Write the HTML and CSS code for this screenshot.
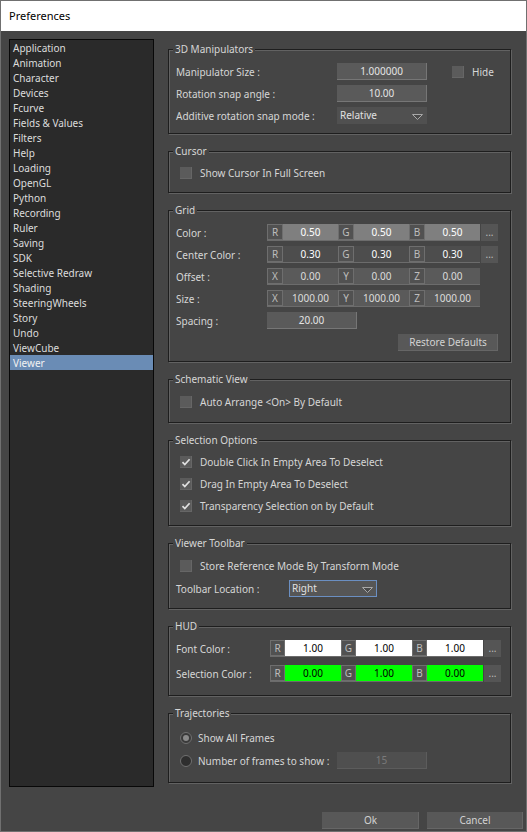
FILE: index.html
```html
<!DOCTYPE html>
<html>
<head>
<meta charset="utf-8">
<title>Preferences</title>
<link rel="stylesheet" href="styles.css">
</head>
<body>
<div class="window">
  <div class="titlebar">Preferences</div>
  <div class="client">
    <div class="main">
      <ul class="nav">
        <li>Application</li>
        <li>Animation</li>
        <li>Character</li>
        <li>Devices</li>
        <li>Fcurve</li>
        <li>Fields &amp; Values</li>
        <li>Filters</li>
        <li>Help</li>
        <li>Loading</li>
        <li>OpenGL</li>
        <li>Python</li>
        <li>Recording</li>
        <li>Ruler</li>
        <li>Saving</li>
        <li>SDK</li>
        <li>Selective Redraw</li>
        <li>Shading</li>
        <li>SteeringWheels</li>
        <li>Story</li>
        <li>Undo</li>
        <li>ViewCube</li>
        <li class="selected">Viewer</li>
      </ul>

      <div class="pages">
        <!-- 3D Manipulators -->
        <section class="group g-manip">
          <span class="group-title">3D Manipulators</span>
          <div class="row">
            <span class="label lw-manip">Manipulator Size :</span>
            <span class="field w90">1.000000</span>
            <span class="check hide-check"><span class="box"></span>Hide</span>
          </div>
          <div class="row">
            <span class="label lw-manip">Rotation snap angle :</span>
            <span class="field w90">10.00</span>
          </div>
          <div class="row">
            <span class="label lw-manip">Additive rotation snap mode :</span>
            <span class="combo w90">Relative
              <svg class="arrow" width="11" height="6" viewBox="0 0 11 6"><path d="M0.5 0.5 H10.5 L5.5 5.5 Z" fill="#4a4a4a" stroke="#a8a8a8" stroke-width="1"/></svg>
            </span>
          </div>
        </section>

        <!-- Cursor -->
        <section class="group g-single">
          <span class="group-title">Cursor</span>
          <div class="row">
            <span class="check"><span class="box"></span>Show Cursor In Full Screen</span>
          </div>
        </section>

        <!-- Grid -->
        <section class="group g-grid">
          <span class="group-title">Grid</span>
          <div class="row">
            <span class="label lw-grid">Color :</span>
            <span class="rgb">
              <span class="axis">R</span><span class="val v-mid">0.50</span>
              <span class="axis">G</span><span class="val v-mid">0.50</span>
              <span class="axis">B</span><span class="val v-mid">0.50</span>
            </span>
            <span class="dots">...</span>
          </div>
          <div class="row">
            <span class="label lw-grid">Center Color :</span>
            <span class="rgb">
              <span class="axis">R</span><span class="val v-dark">0.30</span>
              <span class="axis">G</span><span class="val v-dark">0.30</span>
              <span class="axis">B</span><span class="val v-dark">0.30</span>
            </span>
            <span class="dots">...</span>
          </div>
          <div class="row">
            <span class="label lw-grid">Offset :</span>
            <span class="rgb">
              <span class="axis">X</span><span class="val">0.00</span>
              <span class="axis">Y</span><span class="val">0.00</span>
              <span class="axis">Z</span><span class="val">0.00</span>
            </span>
          </div>
          <div class="row">
            <span class="label lw-grid">Size :</span>
            <span class="rgb">
              <span class="axis">X</span><span class="val">1000.00</span>
              <span class="axis">Y</span><span class="val">1000.00</span>
              <span class="axis">Z</span><span class="val">1000.00</span>
            </span>
          </div>
          <div class="row">
            <span class="label lw-grid">Spacing :</span>
            <span class="field w90">20.00</span>
          </div>
          <div class="row">
            <span class="button restore">Restore Defaults</span>
          </div>
        </section>

        <!-- Schematic View -->
        <section class="group g-schematic">
          <span class="group-title">Schematic View</span>
          <div class="row">
            <span class="check"><span class="box"></span>Auto Arrange &lt;On&gt; By Default</span>
          </div>
        </section>

        <!-- Selection Options -->
        <section class="group g-selection">
          <span class="group-title">Selection Options</span>
          <div class="row">
            <span class="check"><span class="box"><svg width="12" height="12" viewBox="0 0 12 12"><path d="M2.5 6.2 L4.8 8.6 L9.6 3.2" fill="none" stroke="#e2e2e2" stroke-width="1.7"/></svg></span>Double Click In Empty Area To Deselect</span>
          </div>
          <div class="row">
            <span class="check"><span class="box"><svg width="12" height="12" viewBox="0 0 12 12"><path d="M2.5 6.2 L4.8 8.6 L9.6 3.2" fill="none" stroke="#e2e2e2" stroke-width="1.7"/></svg></span>Drag In Empty Area To Deselect</span>
          </div>
          <div class="row">
            <span class="check"><span class="box"><svg width="12" height="12" viewBox="0 0 12 12"><path d="M2.5 6.2 L4.8 8.6 L9.6 3.2" fill="none" stroke="#e2e2e2" stroke-width="1.7"/></svg></span>Transparency Selection on by Default</span>
          </div>
        </section>

        <!-- Viewer Toolbar -->
        <section class="group g-toolbar">
          <span class="group-title">Viewer Toolbar</span>
          <div class="row">
            <span class="check"><span class="box"></span>Store Reference Mode By Transform Mode</span>
          </div>
          <div class="row">
            <span class="label lw-toolbar">Toolbar Location :</span>
            <span class="combo focused w88">Right
              <svg class="arrow" width="11" height="6" viewBox="0 0 11 6"><path d="M0.5 0.5 H10.5 L5.5 5.5 Z" fill="#4a4a4a" stroke="#a8a8a8" stroke-width="1"/></svg>
            </span>
          </div>
        </section>

        <!-- HUD -->
        <section class="group g-hud">
          <span class="group-title">HUD</span>
          <div class="row">
            <span class="label lw-hud">Font Color :</span>
            <span class="rgb hud">
              <span class="axis">R</span><span class="val v-white">1.00</span>
              <span class="axis">G</span><span class="val v-white">1.00</span>
              <span class="axis">B</span><span class="val v-white">1.00</span>
            </span>
            <span class="dots">...</span>
          </div>
          <div class="row">
            <span class="label lw-hud">Selection Color :</span>
            <span class="rgb hud">
              <span class="axis">R</span><span class="val v-green">0.00</span>
              <span class="axis">G</span><span class="val v-green">1.00</span>
              <span class="axis">B</span><span class="val v-green">0.00</span>
            </span>
            <span class="dots">...</span>
          </div>
        </section>

        <!-- Trajectories -->
        <section class="group g-traj">
          <span class="group-title">Trajectories</span>
          <div class="row">
            <span class="radio"><svg width="12" height="12" viewBox="0 0 12 12"><circle cx="6" cy="6" r="5.5" fill="#3a3a3a" stroke="#707070"/><circle cx="6" cy="6" r="3" fill="#8a8a8a"/></svg>Show All Frames</span>
          </div>
          <div class="row">
            <span class="radio lw-radio"><svg width="12" height="12" viewBox="0 0 12 12"><circle cx="6" cy="6" r="5.5" fill="#2e2e2e" stroke="#707070"/></svg>Number of frames to show :</span>
            <span class="field disabled w90">15</span>
          </div>
        </section>
      </div>
    </div>

    <div class="footer">
      <span class="button ok">Ok</span>
      <span class="button cancel">Cancel</span>
    </div>
  </div>
</div>
</body>
</html>
```

FILE: styles.css
```css
* {
  box-sizing: border-box;
  margin: 0;
  padding: 0;
}

html, body {
  width: 527px;
  height: 832px;
  overflow: hidden;
  background: #454545;
}

body {
  font-family: "Noto Sans", "Open Sans", sans-serif;
  font-size: 10px;
  color: #d6d6d6;
}

.window {
  width: 527px;
  height: 832px;
  border: 1px solid #707070;
  display: flex;
  flex-direction: column;
  background: #454545;
}

.titlebar {
  height: 30px;
  line-height: 30px;
  background: #ffffff;
  color: #000000;
  font-size: 11px;
  padding-left: 8px;
}

.client {
  flex: 1;
  padding: 8px 3px 0 8px;
  display: flex;
  flex-direction: column;
}

.main {
  display: flex;
}

/* category list */
.nav {
  width: 145px;
  height: 748px;
  background: #2a2a2a;
  border: 1px solid #080808;
  list-style: none;
}

.nav li {
  height: 15px;
  line-height: 17px;
  padding-left: 3px;
  color: #dcdcdc;
}

.nav li.selected {
  background: #6a8cb5;
  color: #f2f2f2;
}

/* settings page */
.pages {
  width: 343px;
  margin-left: 14px;
  padding-top: 10px;
  display: flex;
  flex-direction: column;
  gap: 17px;
}

.group {
  position: relative;
  border: 1px solid #1e1e1e;
  box-shadow: 1px 1px 0 #626262, inset 1px 1px 0 #626262;
  padding: 12px 0 10px 7px;
  display: flex;
  flex-direction: column;
  gap: 5px;
}

.group-title {
  position: absolute;
  top: -7px;
  left: 4px;
  padding: 0 2px;
  background: #454545;
  line-height: 13px;
  color: #d6d6d6;
}

.g-manip { padding-top: 13px; padding-bottom: 9px; }
.g-single { padding-top: 12px; padding-bottom: 11px; }
.g-grid { padding-top: 13px; padding-bottom: 10px; }
.g-schematic { padding-top: 13px; padding-bottom: 12px; }
.g-selection { padding-top: 12px; padding-bottom: 11px; }
.g-toolbar { padding-top: 13px; padding-bottom: 11px; gap: 6px; }
.g-hud { padding-top: 13px; padding-bottom: 13px; gap: 8px; }
.g-traj { padding-top: 15px; padding-bottom: 13px; gap: 6px; }

.row {
  display: flex;
  align-items: center;
  height: 17px;
}

.label {
  flex: none;
  white-space: nowrap;
}

.lw-manip { width: 161px; }
.lw-grid { width: 91px; }
.lw-toolbar { width: 113px; }
.lw-hud { width: 94px; }

.w90 { width: 90px; }
.w88 { width: 88px; }

.field {
  flex: none;
  height: 17px;
  line-height: 16px;
  background: #5a5a5a;
  border-right: 1px solid #767676;
  border-bottom: 1px solid #767676;
  text-align: center;
  color: #e4e4e4;
}

.field.disabled {
  background: #4f4f4f;
  border-color: #5c5c5c;
  color: #7a7a7a;
}

.combo {
  flex: none;
  position: relative;
  height: 17px;
  line-height: 17px;
  padding-left: 3px;
  background: #505050;
  color: #e0e0e0;
}

.combo.focused {
  border: 1px solid #6b8fc2;
  line-height: 15px;
  padding-left: 2px;
  background: #565656;
}

.combo .arrow {
  position: absolute;
  right: 4px;
  top: 7px;
}

.combo.focused .arrow {
  top: 6px;
  right: 3px;
}

/* checkboxes and radios */
.check, .radio {
  display: flex;
  align-items: center;
  white-space: nowrap;
  margin-left: 4px;
}

.check .box {
  width: 12px;
  height: 12px;
  margin-right: 8px;
  background: #5b5b5b;
  box-shadow: inset -1px -1px 0 #666666;
  display: flex;
}

.hide-check {
  margin-left: 25px;
}

.radio svg {
  margin-right: 6px;
  flex: none;
}

.lw-radio {
  width: 157px;
  flex: none;
}

/* colour / vector triples */
.rgb {
  display: flex;
  height: 17px;
  border-bottom: 1px solid #6c6c6c;
}

.axis {
  width: 16px;
  height: 16px;
  line-height: 14px;
  text-align: center;
  background: #515151;
  border: 1px solid #6e6e6e;
  color: #bdbdbd;
  font-size: 10px;
}

.rgb.hud .axis {
  width: 15px;
}

.val {
  width: 55px;
  height: 16px;
  line-height: 16px;
  text-align: center;
  background: #5a5a5a;
  color: #dcdcdc;
}

.rgb.hud .val {
  width: 56px;
}

.v-mid { background: #7f7f7f; color: #ffffff; }
.v-dark { background: #4d4d4d; color: #ffffff; }
.v-white { background: #ffffff; color: #000000; }
.v-green { background: #00ff00; color: #000000; }

.dots {
  width: 17px;
  height: 17px;
  margin-left: 1px;
  line-height: 16px;
  text-align: center;
  background: #555555;
  color: #bdbdbd;
}

/* buttons */
.button {
  height: 17px;
  line-height: 16px;
  text-align: center;
  background: #585858;
  box-shadow: inset -1px -1px 0 #666666;
  color: #d2d2d2;
}

.restore {
  width: 100px;
  margin-left: auto;
  margin-right: 12px;
}

.footer {
  display: flex;
  justify-content: flex-end;
  gap: 8px;
  margin-top: 25px;
}

.ok { width: 97px; }
.cancel { width: 96px; }
```
